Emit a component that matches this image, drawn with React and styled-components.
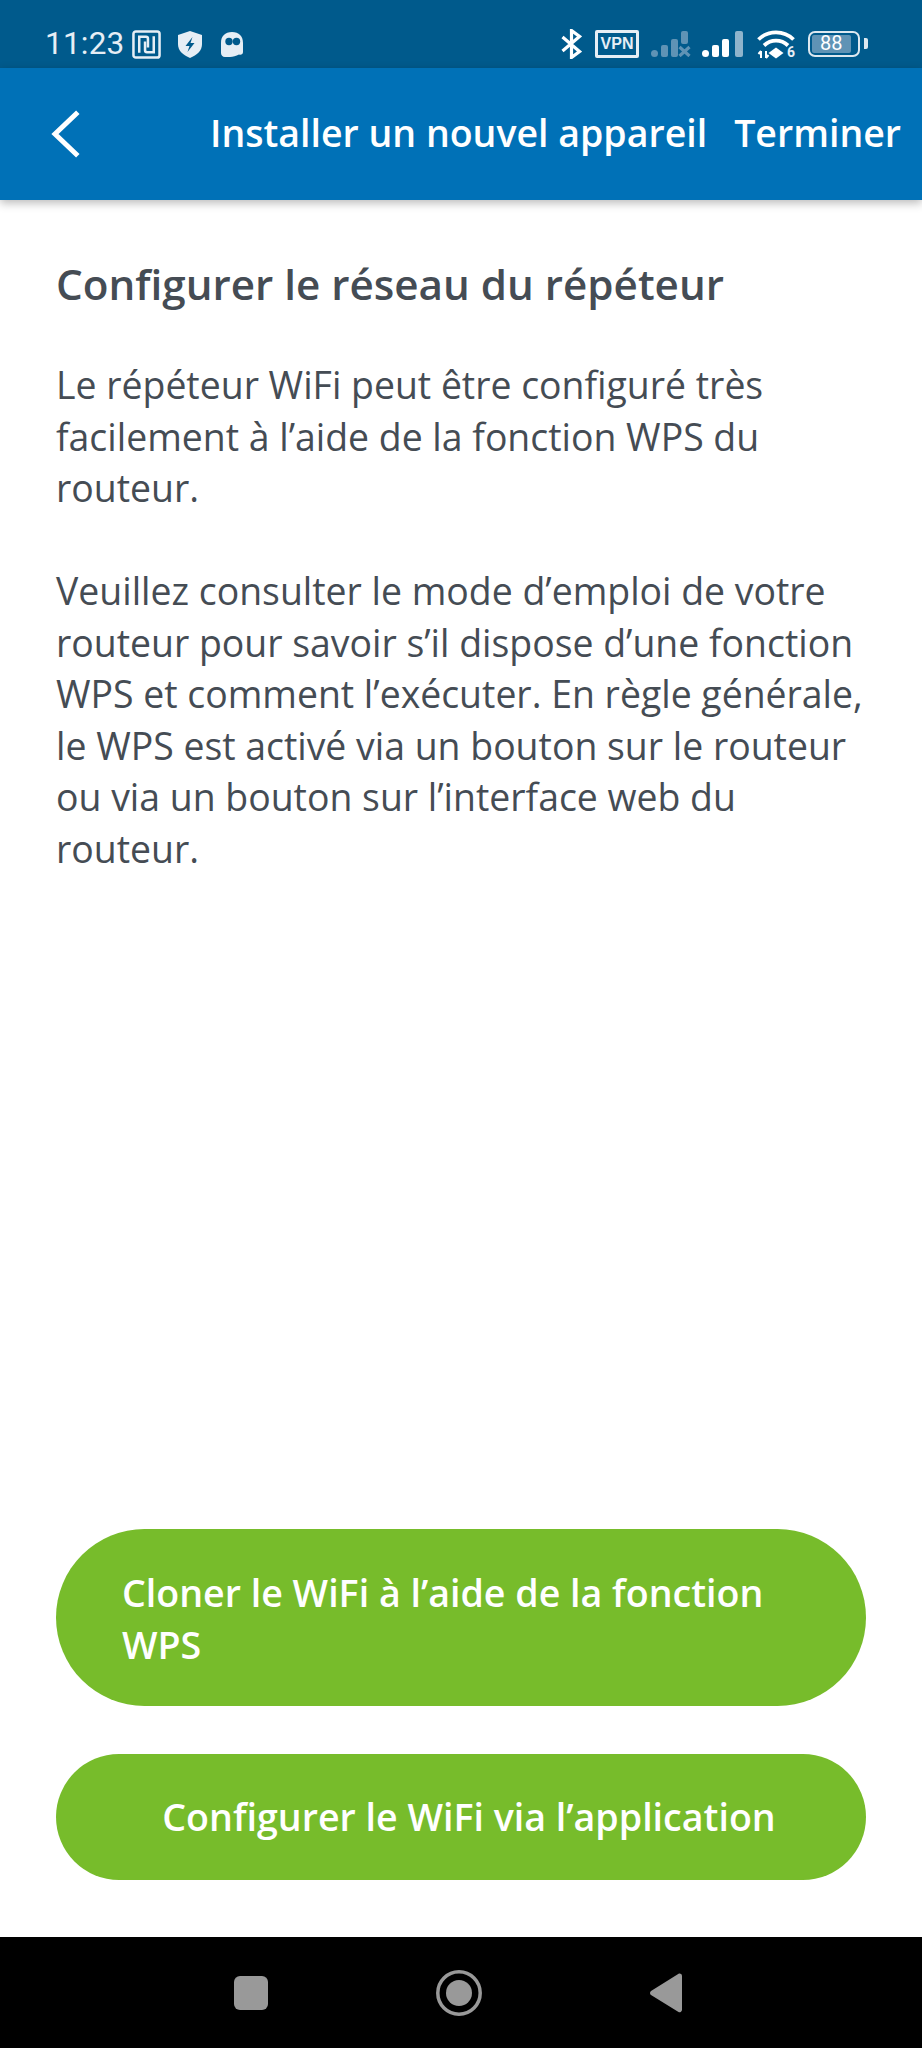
import React from "react";
import styled, { createGlobalStyle } from "styled-components";

const Global = createGlobalStyle`
  html, body { margin: 0; padding: 0; background: #fff; }
  * { box-sizing: border-box; }
`;

const Screen = styled.div`
  width: 922px;
  height: 2048px;
  display: flex;
  flex-direction: column;
  font-family: "Open Sans", sans-serif;
  background: #fff;
  overflow: hidden;
`;

const StatusBar = styled.div`
  height: 68px;
  flex: none;
  background: #005a8c;
  display: flex;
  align-items: center;
  justify-content: space-between;
  padding: 20px 55px 0 45px;
  color: #e6eef5;
`;

const StatusGroup = styled.div`
  display: flex;
  align-items: center;
`;

const Clock = styled.span`
  font-family: Roboto, sans-serif;
  font-size: 31.5px;
  line-height: 30px;
  letter-spacing: 0.2px;
  margin-right: 8px;
`;

const Header = styled.header`
  height: 132px;
  flex: none;
  background: #0071b7;
  box-shadow: 0 3px 9px rgba(0, 0, 0, 0.28);
  display: flex;
  align-items: center;
  justify-content: space-between;
  padding: 0 21px 0 50px;
  color: #fff;
  position: relative;
`;

const HeaderActions = styled.div`
  display: flex;
  align-items: center;
  gap: 27px;
  font-size: 37.5px;
  line-height: 52px;
  font-weight: 600;
  white-space: nowrap;
  margin-bottom: 3px;
`;

const Content = styled.main`
  flex: 1;
  display: flex;
  flex-direction: column;
  padding: 58px 56px 0;
  color: #454c54;
`;

const Title = styled.h1`
  margin: 0 0 49px;
  font-size: 42.2px;
  line-height: 52px;
  font-weight: 600;
`;

const Paragraph = styled.p`
  margin: 0 0 51.5px;
  font-size: 37.4px;
  line-height: 51.5px;
  font-weight: 400;
`;

const Actions = styled.div`
  margin-top: auto;
  display: flex;
  flex-direction: column;
  gap: 48px;
  padding-bottom: 57px;
`;

const PillButton = styled.button`
  width: 810px;
  min-height: 126px;
  border: none;
  border-radius: 89px;
  background: #77bc2b;
  color: #fff;
  font-family: inherit;
  font-size: 37.6px;
  line-height: 52px;
  font-weight: 600;
  padding: ${(p) => (p.$center ? "37px 50px 37px 66px" : "38px 66px 35px")};
  text-align: ${(p) => (p.$center ? "center" : "left")};
`;

const NavBar = styled.nav`
  height: 111px;
  flex: none;
  background: #000;
  display: flex;
  align-items: center;
  justify-content: center;
  gap: 168px;
  padding: 0 7px 0 0;
`;

const NfcIcon = () => (
  <svg width="29" height="29" viewBox="0 0 30 30" fill="none" stroke="#e6eef5" strokeWidth="2.6">
    <rect x="1.500" y="1.500" width="27" height="27" rx="2.500" />
    <path d="M7.500 23.500V7h7a2 2 0 0 1 2 2v9" />
    <path d="M22.500 6.500V23h-7a2 2 0 0 1-2-2v-9" />
  </svg>
);

const ShieldIcon = () => (
  <svg width="24" height="27" viewBox="0 0 24 27" style={{ marginLeft: 17 }}>
    <path d="M12 0l12 4v9c0 7-5 11-12 14C5 24 0 20 0 13V4z" fill="#e6eef5" />
    <path d="M14.500 6l-7 9h4l-2 6 7-9h-4z" fill="#005a8c" />
  </svg>
);

const GhostIcon = () => (
  <svg width="22" height="25" viewBox="0 0 22 25" style={{ marginLeft: 19 }}>
    <path d="M0 11C0 4 4 0 11 0s11 4 11 11v9c0 2.500-2 3-4 2.500-3 1.500-6 2.500-9 2.500H4c-2.500 0-4-2-4-4z" fill="#e6eef5" />
    <circle cx="8" cy="9.500" r="3.700" fill="#005a8c" />
    <circle cx="15.500" cy="9.500" r="3.700" fill="#005a8c" />
  </svg>
);

const BluetoothIcon = () => (
  <svg width="21" height="30" viewBox="0 0 21 30" fill="none" stroke="#fff" strokeWidth="3.200" style={{ marginRight: 13 }}>
    <path d="M1.500 8l17 14.500L10.500 28.500V1.500l8 6L1.500 22" />
  </svg>
);

const VpnBadge = styled.span`
  width: 44px;
  height: 28px;
  border: 3px solid #e6eef5;
  border-radius: 2px;
  display: flex;
  align-items: center;
  justify-content: center;
  font-family: "Liberation Sans", sans-serif;
  font-size: 16px;
  font-weight: 700;
  color: #e6eef5;
  margin-right: 12px;
`;

const Signal = ({ dim, cross }) => {
  const c = dim ? "#5f93b5" : "#fff";
  const last = dim ? "#5f93b5" : "#8fb4cc";
  return (
    <svg width="41" height="26" viewBox="0 0 41 26" style={{ marginRight: dim ? 10 : 14 }}>
      <rect x="0" y="19" width="7" height="7" rx="3.500" fill={c} />
      <rect x="10" y="14" width="7" height="12" rx="2" fill={c} />
      <rect x="20" y="8" width="7" height="18" rx="2" fill={c} />
      {cross ? (
        <>
          <rect x="30" y="0" width="7" height="13" rx="2" fill={c} />
          <path d="M28.500 16l10 9M38.500 16l-10 9" stroke={c} strokeWidth="3.200" />
        </>
      ) : (
        <rect x="33" y="0" width="8" height="26" rx="2" fill={last} />
      )}
    </svg>
  );
};

const WifiIcon = () => (
  <svg width="38" height="30" viewBox="0 0 38 30" fill="none" stroke="#fff" strokeWidth="3.800" style={{ marginRight: 13 }}>
    <path d="M1.500 10.500C11 1 27 1 36.500 10.500" />
    <path d="M7 16.500c7-6.500 17-6.500 24 0" />
    <path d="M19 18.500l7.500 5.500-7.500 5.500-7.500-5.500z" fill="#fff" stroke="none" />
    <path d="M4 29v-7M1.500 25L4 22M9 22v7M9 29l2.500-3" strokeWidth="2" />
  </svg>
);

const WifiWrap = styled.div`
  position: relative;
  display: flex;
`;

const WifiSix = styled.span`
  position: absolute;
  right: 13px;
  bottom: 0;
  font-family: Roboto, sans-serif;
  font-size: 14px;
  line-height: 13px;
  font-weight: 700;
  color: #e6eef5;
`;

const BatteryShell = styled.div`
  width: 52px;
  height: 26px;
  border: 2.500px solid #dce8f0;
  border-radius: 7px;
  padding: 2px;
  position: relative;
  margin-right: 7px;
  &::after {
    content: "";
    position: absolute;
    right: -10px;
    top: 5px;
    width: 4px;
    height: 11px;
    border-radius: 0 2px 2px 0;
    background: #dce8f0;
  }
`;

const BatteryFill = styled.div`
  height: 100%;
  border-radius: 2px;
  background: #5f93b5;
  color: #fff;
  font-family: Roboto, sans-serif;
  font-size: 20px;
  line-height: 17px;
  text-align: center;
`;

const NavIconSvg = styled.svg`
  display: block;
  fill: #999;
`;

export default function App() {
  return (
    <Screen>
      <Global />
      <StatusBar>
        <StatusGroup>
          <Clock>11:23</Clock>
          <NfcIcon />
          <ShieldIcon />
          <GhostIcon />
        </StatusGroup>
        <StatusGroup>
          <BluetoothIcon />
          <VpnBadge>VPN</VpnBadge>
          <Signal dim cross />
          <Signal />
          <WifiWrap>
            <WifiIcon />
            <WifiSix>6</WifiSix>
          </WifiWrap>
          <BatteryShell>
            <BatteryFill style={{ width: "88%" }}>88</BatteryFill>
          </BatteryShell>
        </StatusGroup>
      </StatusBar>
      <Header>
        <svg width="30" height="48" viewBox="0 0 30 48" fill="none" stroke="#fff" strokeWidth="5" strokeLinecap="square">
          <path d="M26 4L5 24l21 20" />
        </svg>
        <HeaderActions>
          <span>Installer un nouvel appareil</span>
          <span>Terminer</span>
        </HeaderActions>
      </Header>
      <Content>
        <Title>Configurer le réseau du répéteur</Title>
        <Paragraph>
          Le répéteur WiFi peut être configuré très
          <br />
          facilement à l’aide de la fonction WPS du
          <br />
          routeur.
        </Paragraph>
        <Paragraph>
          Veuillez consulter le mode d’emploi de votre
          <br />
          routeur pour savoir s’il dispose d’une fonction
          <br />
          WPS et comment l’exécuter. En règle générale,
          <br />
          le WPS est activé via un bouton sur le routeur
          <br />
          ou via un bouton sur l’interface web du
          <br />
          routeur.
        </Paragraph>
        <Actions>
          <PillButton>Cloner le WiFi à l’aide de la fonction WPS</PillButton>
          <PillButton $center>Configurer le WiFi via l’application</PillButton>
        </Actions>
      </Content>
      <NavBar>
        <NavIconSvg width="34" height="34" viewBox="0 0 34 34">
          <rect x="0" y="0" width="34" height="34" rx="6" />
        </NavIconSvg>
        <NavIconSvg width="46" height="46" viewBox="0 0 46 46">
          <circle cx="23" cy="23" r="21.200" fill="none" stroke="#999" strokeWidth="3.500" />
          <circle cx="23" cy="23" r="13" />
        </NavIconSvg>
        <NavIconSvg width="32" height="40" viewBox="0 0 32 40">
          <path d="M29 .5a2.500 2.500 0 0 1 3 2.500v34a2.500 2.500 0 0 1-3.500 2L1 22a2.500 2.500 0 0 1 0-4z" />
        </NavIconSvg>
      </NavBar>
    </Screen>
  );
}
